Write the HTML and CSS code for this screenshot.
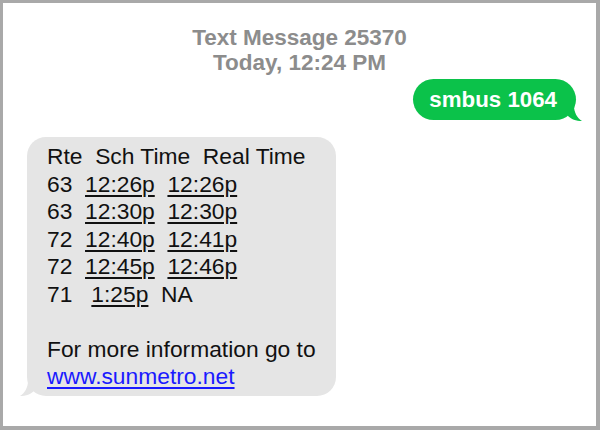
FILE: index.html
```html
<!DOCTYPE html>
<html>
<head>
<meta charset="utf-8">
<link rel="stylesheet" href="styles.css">
</head>
<body>
<div class="frame">
  <div class="header">
    <div>Text Message 25370</div>
    <div>Today, 12:24 PM</div>
  </div>
  <div class="row-out">
    <div class="bubble out">smbus 1064
      <svg class="tail tail-out" width="16" height="16" viewBox="0 0 16 16"><path d="M0 0 L6 0 C6 6 9 12 14 15 C8 15 3 13 0 10 Z" fill="#0bc24a"/></svg>
    </div>
  </div>
  <div class="row-in">
    <div class="bubble in"><div class="line">Rte  Sch Time  Real Time</div><div class="line">63  <u>12:26p</u>  <u>12:26p</u></div><div class="line">63  <u>12:30p</u>  <u>12:30p</u></div><div class="line">72  <u>12:40p</u>  <u>12:41p</u></div><div class="line">72  <u>12:45p</u>  <u>12:46p</u></div><div class="line">71   <u>1:25p</u>  NA</div><div class="line"> </div><div class="line">For more information go to</div><div class="line"><a class="link" href="#">www.sunmetro.net</a></div>
      <svg class="tail tail-in" width="16" height="16" viewBox="0 0 16 16"><path d="M16 0 L10 0 C10 6 7 12 2 15 C8 15 13 13 16 10 Z" fill="#e5e5e5"/></svg>
    </div>
  </div>
</div>
</body>
</html>
```

FILE: styles.css
```css
html, body {
  margin: 0;
  padding: 0;
  background: #ffffff;
}
.frame {
  box-sizing: border-box;
  width: 600px;
  height: 430px;
  border-style: solid;
  border-color: #a9a9a9;
  border-width: 3px 4px 4px 3px;
  font-family: "Liberation Sans", Arial, sans-serif;
  background: #ffffff;
}
.header {
  padding-top: 22px;
  text-align: center;
  color: #8c8c8c;
  font-weight: bold;
  font-size: 22.5px;
  line-height: 25px;
}
.row-out {
  display: flex;
  justify-content: flex-end;
  padding-right: 20px;
  margin-top: 4px;
}
.bubble {
  position: relative;
}
.out {
  background: #0bc24a;
  color: #ffffff;
  font-weight: bold;
  font-size: 22.3px;
  height: 41px;
  line-height: 41px;
  padding: 0 19px 0 16px;
  border-radius: 21px;
}
.tail {
  position: absolute;
  bottom: -2px;
}
.tail-out {
  right: -8px;
}
.row-in {
  display: flex;
  padding-left: 24px;
  margin-top: 17px;
}
.in {
  background: #e5e5e5;
  color: #111111;
  font-size: 22.8px;
  line-height: 27.5px;
  width: 309px;
  box-sizing: border-box;
  padding: 6px 10px 5px 20px;
  border-radius: 19px;
}
.line {
  white-space: pre;
  height: 27.5px;
}
.line u {
  text-decoration-thickness: 1.5px;
  text-underline-offset: 3px;
}
.link {
  color: #1a1aff;
  text-decoration: underline;
  text-decoration-thickness: 1.5px;
  text-underline-offset: 3px;
}
.tail-in {
  left: -9px;
  bottom: -1px;
}
```
